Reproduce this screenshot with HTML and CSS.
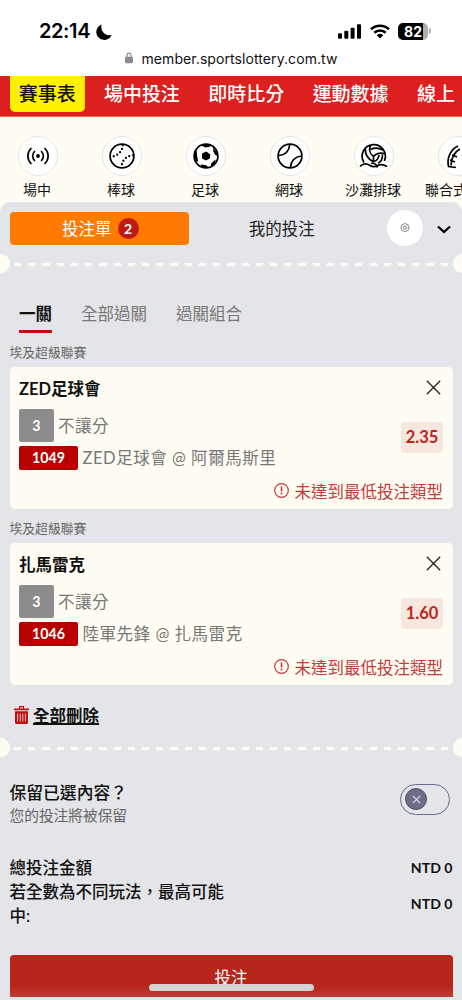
FILE: index.html
```html
<!DOCTYPE html>
<html lang="zh-Hant">
<head>
<meta charset="utf-8">
<title>投注單</title>
<link rel="stylesheet" href="styles.css">
</head>
<body>
<div class="screen">
  <header class="browser">
    <div class="status">
      <span class="clock">22:14</span>
      <svg class="moon" width="16" height="16" viewBox="0 0 16 16"><path d="M5.600.4A8 8 0 1 0 15.800 10.700C10 13 4 8 5.600.4Z"/></svg>
      <svg class="signal" width="23" height="15" viewBox="0 0 23 15"><rect x="0" y="9.300" width="4" height="5.400" rx="1"/><rect x="6.300" y="6.800" width="4" height="7.900" rx="1"/><rect x="12.600" y="3.700" width="4" height="11" rx="1"/><rect x="19" y="0.300" width="4" height="14.400" rx="1"/></svg>
      <svg class="wifi" width="20" height="15" viewBox="0 0 20 15"><g fill="none" stroke="#000" stroke-width="2.600"><path d="M1 5.300a13 13 0 0 1 18 0"/><path d="M4.300 8.800a8.200 8.200 0 0 1 11.400 0"/></g><path d="M6.700 11.200a5 5 0 0 1 6.600 0L10 14.600Z"/></svg>
      <span class="battery">82</span><span class="battery-cap"></span>
    </div>
    <div class="address">
      <svg width="8" height="12" viewBox="0 0 8 12"><path d="M2 5V3.200a2 2 0 0 1 4 0V5" fill="none" stroke="#8a8a8e" stroke-width="1.200"/><rect x="0" y="4.800" width="8" height="6.400" rx="1.200" fill="#8a8a8e"/></svg>
      <span>member.sportslottery.com.tw</span>
    </div>
  </header>

  <nav class="topnav">
    <a class="nav-item active">賽事表</a><a class="nav-item">場中投注</a><a class="nav-item">即時比分</a><a class="nav-item">運動數據</a><a class="nav-item">線上</a>
  </nav>

  <div class="sports">
    <div class="sport"><span class="disc"><svg viewBox="0 0 26 26"><circle cx="13" cy="13" r="1.900"/><g fill="none" stroke="#000" stroke-width="1.700" stroke-linecap="round"><path d="M9.500 8.500a6.500 6.500 0 0 0 0 9M16.500 8.500a6.500 6.500 0 0 1 0 9M6 5.500a10.500 10.500 0 0 0 0 15M20 5.500a10.500 10.500 0 0 1 0 15"/></g></svg></span><span>場中</span></div>
    <div class="sport"><span class="disc"><svg viewBox="0 0 26 26"><circle class="ring" cx="13" cy="13" r="11.900"/><g fill="none" stroke="#000" stroke-width="2.300" stroke-linecap="round" stroke-dasharray="0 3.800"><path d="M13.800 2.200C13.500 8 9 13 2 13.800"/><path d="M24 12.300C17 13 13 17.500 12.500 24"/></g></svg></span><span>棒球</span></div>
    <div class="sport"><span class="disc"><svg viewBox="0 0 26 26"><circle class="ring" cx="13" cy="13" r="11.900"/><path d="M9 10.500 13.300 8.600l4 2.900-.3 3.800-4 2.300-4-2.200ZM8 2.500l5-1.300 5.500 1.200-2 1.400-4 .7ZM20 4.500l4 5 .3 3.500-2-1-2-3.500ZM22.800 16.500l-1 4-4 3 .3-3 2.500-2.500ZM8 21.500l5 .7 3 2.300-4 .3-4.500-1.500ZM1.600 8.500l2-1.500.6 6.500 1 5-2-.1-1.600-4Z"/></svg></span><span>足球</span></div>
    <div class="sport"><span class="disc"><svg viewBox="0 0 26 26"><circle class="ring" cx="13" cy="13" r="11.900"/><path class="ring" d="M12.800 1.200C12.200 8.500 8 12 1.500 12.600M24.500 13C17.700 13.800 14 17.500 13.300 24.700"/></svg></span><span>網球</span></div>
    <div class="sport"><span class="disc"><svg class="wide" viewBox="0 0 29 26"><path class="ring" d="M5 19.500A11.600 11.600 0 1 1 25.300 18M6.500 6c-.5 5 2 9.500 7.500 12.500M12 2C9.500 6 10.500 10.500 14.500 13.500c3-3.500 7-4 11-3M11.500 6.500c4-2 8.500-1.500 12.500.5M14.500 13.500v5c3.500-.5 5-3 5.500-6.500M19 20c3-1 4.500-4 4.500-8.500M1 23.500c3-3 7-3 10-1 3 2 4.500 1.500 7 .5 3-2 6.500-1.500 10 .5M12 20.500c3-.8 5.500 1 6.500 4"/></svg></span><span>沙灘排球</span></div>
    <div class="sport"><span class="disc"><svg viewBox="0 0 26 26"><path class="ring" d="M3.500 23.500C1.500 15 6 6 13 3M6 22.500C6.500 15 9 9 15 6M3 23.500l8 1M5 17l5 2M7 12l5 2"/></svg></span><span class="edge-label">聯合式</span></div>
  </div>

  <main class="slip">
    <div class="slip-head">
      <div class="slip-tab on">投注單<b class="count">2</b></div>
      <div class="slip-tab">我的投注</div>
      <span class="gear"><svg width="10" height="10" viewBox="0 0 12 12" fill="none" stroke="#555" stroke-width=".9"><path d="m4.900 1 .5-.5h1.200l.5.900 1 .4 1-.3.900.9-.3 1 .4 1 .9.500v1.200l-.9.500-.4 1 .3 1-.9.900-1-.3-1 .4-.5.900H5.400l-.5-.9-1-.4-1 .3-.9-.9.300-1-.4-1-.9-.5V4.900l.9-.5.400-1-.3-1 .9-.9 1 .3Z"/><circle cx="6" cy="5.500" r="1.800"/></svg></span>
      <svg class="chevron" width="14" height="9" viewBox="0 0 14 9"><path d="M1 1.500 7 7l6-5.500" fill="none" stroke="#000" stroke-width="2.300"/></svg>
    </div>
    <div class="perforation"><i></i></div>

    <div class="modes"><span class="mode on">一關</span><span class="mode">全部過關</span><span class="mode">過關組合</span></div>

    <div class="league">埃及超級聯賽</div>
    <section class="card">
      <div class="card-title"><span>ZED足球會</span><svg class="close" width="15" height="15" viewBox="0 0 15 15"><path d="m.8.800 13.400 13.400M14.200.800.800 14.200"/></svg></div>
      <div class="pick">
        <div class="lines">
          <div class="line"><b class="qty">3</b><span>不讓分</span></div>
          <div class="line"><b class="code">1049</b><span>ZED足球會 @ 阿爾馬斯里</span></div>
        </div>
        <b class="odds">2.35</b>
      </div>
      <div class="warning"><svg width="15" height="15" viewBox="0 0 15 15"><circle cx="7.500" cy="7.500" r="6.800" fill="none" stroke="#c4393a" stroke-width="1.200"/><path d="M7.500 3.500v5M7.500 9.800v1.700" stroke="#c4393a" stroke-width="1.600"/></svg><span>未達到最低投注類型</span></div>
    </section>

    <div class="league">埃及超級聯賽</div>
    <section class="card">
      <div class="card-title"><span>扎馬雷克</span><svg class="close" width="15" height="15" viewBox="0 0 15 15"><path d="m.8.800 13.400 13.400M14.200.800.800 14.200"/></svg></div>
      <div class="pick">
        <div class="lines">
          <div class="line"><b class="qty">3</b><span>不讓分</span></div>
          <div class="line"><b class="code">1046</b><span>陸軍先鋒 @ 扎馬雷克</span></div>
        </div>
        <b class="odds">1.60</b>
      </div>
      <div class="warning"><svg width="15" height="15" viewBox="0 0 15 15"><circle cx="7.500" cy="7.500" r="6.800" fill="none" stroke="#c4393a" stroke-width="1.200"/><path d="M7.500 3.500v5M7.500 9.800v1.700" stroke="#c4393a" stroke-width="1.600"/></svg><span>未達到最低投注類型</span></div>
    </section>

    <div class="clear">
      <svg width="15" height="18" viewBox="0 0 15 18"><path d="M0 2.500h15v1.700H0ZM5 0h5v3H8.800V1.200H6.200V3H5ZM1 5.200h13V16.500a1.500 1.500 0 0 1-1.500 1.500h-10A1.500 1.500 0 0 1 1 16.500Z" fill="#c00d12"/><path d="M3.600 7.500v8M6.200 7.500v8M8.800 7.500v8M11.400 7.500v8" stroke="#e9c4c6" stroke-width="1"/></svg>
      <span>全部刪除</span>
    </div>
    <div class="perforation second"><i></i></div>

    <div class="keep">
      <div><div class="keep-title">保留已選內容？</div><div class="keep-sub">您的投注將被保留</div></div>
      <span class="toggle"><span class="knob"><svg width="9" height="9" viewBox="0 0 9 9"><path d="m.8.800 7.400 7.400M8.200.800.800 8.200" stroke="#e4e5e9" stroke-width="1.100"/></svg></span></span>
    </div>

    <div class="totals">
      <div class="total"><span>總投注金額</span><b>NTD 0</b></div>
      <div class="total"><span>若全數為不同玩法，最高可能中:</span><b>NTD 0</b></div>
    </div>
    <div class="submit">投注</div>
  </main>
  <div class="home-bar"></div>
</div>
</body>
</html>
```

FILE: styles.css
```css
* { box-sizing: border-box; }
body { margin: 0; background: #e4e5e8; }
svg { display: block; flex: none; }
.screen {
  position: relative;
  width: 462px;
  height: 1000px;
  overflow: hidden;
  background: #fffdf3;
  font-family: Lato, "Noto Sans CJK TC", sans-serif;
  color: #111;
}
.screen span, .screen b { white-space: nowrap; }

.browser { height: 76px; background: #fff; font-family: Inter, sans-serif; }
.status { display: flex; align-items: center; height: 46px; padding: 16px 34px 0 39px; }
.clock { width: 52px; font-size: 20px; font-weight: 600; letter-spacing: -.4px; line-height: 24px; color: #000; }
.moon { margin: 1px 0 0 5px; }
.signal { margin-left: auto; }
.wifi { margin: 0 8px 0 9px; }
.battery {
  width: 30px; height: 17px; border-radius: 5px;
  background: linear-gradient(90deg, #000 25px, #aeaeb0 25px);
  color: #fff; font-size: 14px; font-weight: 700; line-height: 17px; text-align: center;
}
.battery-cap { width: 2px; height: 6px; margin: 0 -3px 0 1px; border-radius: 0 2px 2px 0; background: #b5b5b7; }
.address { display: flex; align-items: center; justify-content: center; gap: 8px; height: 24px; padding-left: 1px; font-size: 14px; letter-spacing: .08px; }

.topnav {
  display: flex; gap: 28.500px; height: 41px; padding-left: 9.500px;
  background: #dc1f1f; border-bottom: 1px solid #f0694f;
  color: #fff; font-size: 19px; font-weight: 500; line-height: 35px; letter-spacing: -.05px;
}
.nav-item { flex: none; }
.nav-item.active { width: 75.500px; height: 36px; margin-right: -9.500px; border-radius: 0 0 5px 5px; background: #fff100; color: #111; text-align: center; }

.sports { display: flex; height: 85px; padding-top: 18.500px; margin-left: -4.500px; }
.sport { flex: 0 0 84px; display: flex; flex-direction: column; align-items: center; gap: 4px; font-size: 14px; line-height: 20px; }
.sport > span:last-child { margin-left: -1px; }
.sport > .edge-label { align-self: flex-start; padding-left: 10.500px; }
.disc { flex: none; display: grid; place-items: center; width: 40px; height: 40px; border: 1px solid #e5e5e5; border-radius: 50%; background: #fff; }
.disc svg { width: 26px; height: 26px; }
.disc .wide { width: 29px; }
.ring { fill: none; stroke: #000; stroke-width: 1.700; }

.slip { height: 798px; border-radius: 10px 10px 0 0; background: #e4e5e8; }
.slip-head { display: flex; align-items: center; height: 52px; padding: 0 11px 0 9.500px; }
.slip-tab { display: flex; align-items: center; justify-content: center; gap: 6px; width: 179.500px; height: 33px; font-size: 16.500px; color: #222; }
.slip-tab.on { padding-left: 2px; border-radius: 4px; background: #ff7b00; color: #fff; }
.slip-tab + .slip-tab { width: 185.500px; }
.count { width: 21px; height: 21px; border-radius: 50%; background: #c11a14; font-size: 14px; line-height: 21px; text-align: center; }
.gear { display: grid; place-items: center; width: 36px; height: 36px; margin-left: 12px; border-radius: 50%; background: #fff; }
.chevron { margin: 2px 0 0 auto; }

.perforation { display: flex; align-items: center; justify-content: space-between; height: 19px; overflow: hidden; }
.perforation::before, .perforation::after { content: ""; flex: none; width: 19px; height: 19px; border-radius: 50%; background: #fffdf3; }
.perforation::before { margin-left: -9.500px; }
.perforation::after { margin-right: -9.500px; }
.perforation i { width: 434px; height: 3px; margin-top: 2px; background: repeating-linear-gradient(90deg, #fffdf3 0 7.200px, transparent 7.200px 14.220px); }

.modes { display: flex; gap: 29px; height: 42px; margin-top: 27px; padding-left: 19px; font-size: 16.500px; line-height: 28px; color: #777; }
.mode { height: 33px; }
.mode.on { border-bottom: 3px solid #c30d12; color: #111; font-weight: 700; }

.league { height: 24.500px; padding-left: 9.500px; font-size: 12.800px; line-height: 20px; color: #666; }
.card { width: 443px; height: 142.500px; margin: 0 0 9px 9.500px; padding: 9px 9.500px 0; border-radius: 5px; background: #fffdf3; }
.card-title { display: flex; align-items: center; justify-content: space-between; height: 24px; font-size: 16.500px; font-weight: 700; }
.close { margin-right: 2.500px; fill: none; stroke: #222; stroke-width: 1.300; }
.pick { display: flex; align-items: center; justify-content: space-between; margin-top: 9.500px; }
.lines { display: flex; flex-direction: column; gap: 3.500px; }
.line { display: flex; align-items: center; gap: 4.500px; font-size: 16.500px; line-height: 24px; letter-spacing: .54px; color: #777; }
.qty, .code { border-radius: 2px; color: #fff; font-size: 14.200px; letter-spacing: 0; text-align: center; }
.qty { width: 34.500px; height: 33px; line-height: 33px; background: #8c8c8c; }
.code { width: 59px; height: 24px; background: #b80000; }
.odds { width: 42px; height: 31px; margin-top: -4px; border-radius: 4px; background: #f8e7df; color: #b9261a; font-size: 16.500px; line-height: 31px; text-align: center; }
.warning { display: flex; align-items: center; justify-content: flex-end; gap: 6px; height: 24px; margin-top: 9px; font-size: 16.500px; color: #c4393a; }

.clear { display: flex; align-items: center; gap: 4.500px; height: 28px; margin-top: 16px; padding-left: 13.500px; font-size: 16.500px; font-weight: 700; }
.clear span { text-decoration: underline; text-decoration-thickness: 1.500px; text-underline-offset: 1px; }
.second { margin-top: 9px; }

.keep { display: flex; align-items: flex-start; justify-content: space-between; height: 50px; margin-top: 23.500px; padding: 0 12px 0 9.500px; }
.keep-title { font-size: 16.800px; font-weight: 500; line-height: 24px; }
.keep-sub { margin-top: -1px; font-size: 14.700px; line-height: 22px; color: #666; }
.toggle { display: flex; align-items: center; width: 50px; height: 31px; margin-top: 3px; padding-left: 4px; border: 1.300px solid #6a6990; border-radius: 16px; }
.knob { display: grid; place-items: center; width: 22px; height: 22px; border: 1.500px solid #4e4c70; border-radius: 50%; background: #6e6d88; }

.totals { margin-top: 25px; padding: 0 9.500px; }
.total { display: flex; align-items: center; justify-content: space-between; font-size: 16.500px; font-weight: 500; line-height: 24px; }
.screen .total span { width: 218px; white-space: normal; }
.total b { font-size: 14.100px; }
.submit { width: 443px; height: 42px; margin: 27px 0 0 9.500px; border-radius: 4px 4px 0 0; background: linear-gradient(#b6261b 75%, #bd4035); color: #fff; font-size: 16.500px; line-height: 47px; text-align: center; }
.home-bar { position: absolute; left: 149px; top: 984px; width: 165px; height: 7px; border-radius: 4px; background: #d5d3d3; }
```
